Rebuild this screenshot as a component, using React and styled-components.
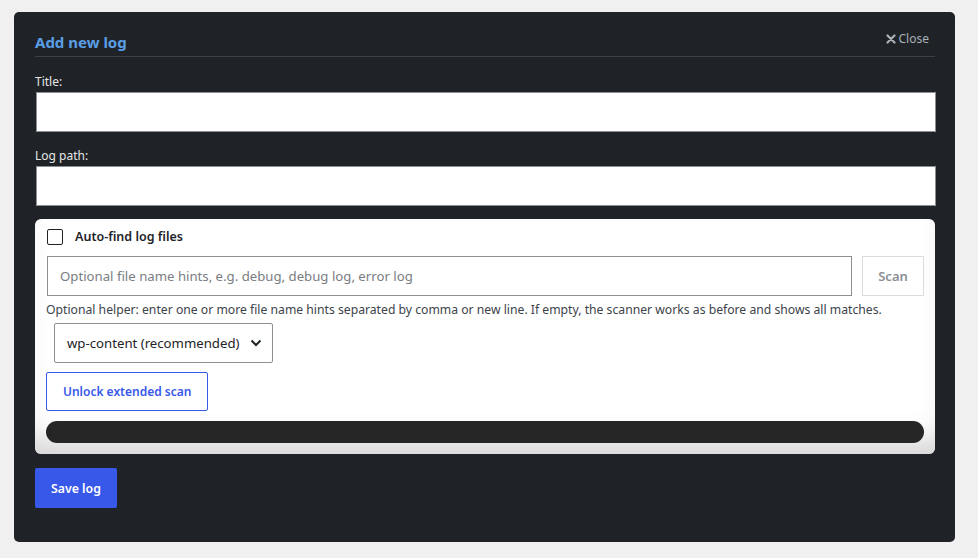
import React from 'react';
import styled, { createGlobalStyle } from 'styled-components';

const Global = createGlobalStyle`
  body {
    margin: 0;
    background: #f0f0f0;
    font-family: "Noto Sans", "Open Sans", sans-serif;
  }
  * { box-sizing: border-box; }
`;

const Page = styled.div`
  padding: 12px 23px 17px 14px;
`;

const Modal = styled.div`
  background: #1f2327;
  border-radius: 5px;
  padding: 18px 20px 34px 20px;
`;

const Header = styled.div`
  display: flex;
  justify-content: space-between;
  align-items: flex-end;
  margin: 0 0 0 1px;
  padding-bottom: 4px;
  border-bottom: 1px solid #3c4147;
`;

const Heading = styled.h2`
  margin: 0;
  font-size: 15px;
  font-weight: 700;
  color: #5a9ee6;
`;

const CloseLink = styled.button`
  display: flex;
  align-items: center;
  gap: 3px;
  background: none;
  border: 0;
  padding: 0;
  margin: 0 6px 5px 0;
  color: #a9b0b8;
  font-family: inherit;
  font-size: 12px;
  cursor: pointer;
`;

const Field = styled.div`
  display: flex;
  flex-direction: column;
  margin-top: ${p => p.$top}px;
`;

const Label = styled.label`
  color: #e6e6e6;
  font-size: 12px;
  margin: 0 0 2px 1px;
`;

const TextInput = styled.input`
  height: 40px;
  margin: 0 -1px 0 2px;
  border: 1px solid #8c8f94;
  background: #fff;
  font-family: inherit;
`;

const Card = styled.div`
  margin: 13px 0 0 1px;
  background: #fff;
  border-radius: 6px;
  padding: 9px 11px 11px 12px;
  box-shadow: inset 0 -28px 30px -16px #d2d2d2;
`;

const CheckRow = styled.label`
  display: flex;
  align-items: center;
  gap: 12px;
  font-size: 12.5px;
  font-weight: 600;
  color: #1d2327;
`;

const Box = styled.span`
  width: 16px;
  height: 16px;
  border: 1.5px solid #1d2327;
  border-radius: 2px;
`;

const ScanRow = styled.div`
  display: flex;
  gap: 10px;
  margin-top: 11px;
`;

const HintInput = styled.input`
  flex: 1;
  height: 40px;
  border: 1px solid #8c8f94;
  padding: 0 12px;
  font-family: inherit;
  font-size: 13.2px;
  &::placeholder { color: #7a7d82; }
`;

const GhostButton = styled.button`
  width: 62px;
  height: 40px;
  background: #fff;
  border: 1px solid #dcdcde;
  color: #8c8f94;
  font-family: inherit;
  font-size: 13px;
  font-weight: 600;
`;

const Help = styled.p`
  margin: 5px 0 0 -1px;
  font-size: 12.2px;
  color: #3c434a;
`;

const Select = styled.div`
  display: inline-flex;
  align-items: center;
  gap: 11px;
  height: 40px;
  margin: 5px 0 0 7px;
  padding: 0 10px 0 12px;
  border: 1px solid #8c8f94;
  border-radius: 2px;
  font-size: 13.2px;
  white-space: nowrap;
  color: #1d2327;
`;

const OutlineButton = styled.button`
  display: block;
  height: 39px;
  margin: 9px 0 0 -1px;
  padding: 0 16px;
  background: transparent;
  border: 1px solid #3858e9;
  border-radius: 2px;
  color: #3858e9;
  font-family: inherit;
  font-size: 12px;
  font-weight: 600;
`;

const Progress = styled.div`
  height: 22px;
  margin: 10px 0 0 -1px;
  border-radius: 11px;
  background: #262626;
`;

const PrimaryButton = styled.button`
  margin: 14px 0 0 1px;
  height: 40px;
  padding: 0 16px;
  background: #3858e9;
  border: 0;
  border-radius: 2px;
  color: #fff;
  font-family: inherit;
  font-size: 12.3px;
  font-weight: 600;
`;

export default function App() {
  return (
    <Page>
      <Global />
      <Modal>
        <Header>
          <Heading>Add new log</Heading>
          <CloseLink>
            <svg width="10" height="10" viewBox="0 0 10 10">
              <path d="M1.5 1.5l7 7M8.5 1.5l-7 7" stroke="#a9b0b8" strokeWidth="2.2" strokeLinecap="round" />
            </svg>
            Close
          </CloseLink>
        </Header>
        <Field $top={16}>
          <Label>Title:</Label>
          <TextInput />
        </Field>
        <Field $top={15}>
          <Label>Log path:</Label>
          <TextInput />
        </Field>
        <Card>
          <CheckRow>
            <Box />
            Auto-find log files
          </CheckRow>
          <ScanRow>
            <HintInput placeholder="Optional file name hints, e.g. debug, debug log, error log" />
            <GhostButton>Scan</GhostButton>
          </ScanRow>
          <Help>
            Optional helper: enter one or more file name hints separated by comma or new line. If empty, the scanner works as before and shows all matches.
          </Help>
          <div>
            <Select>
              wp-content (recommended)
              <svg width="12" height="8" viewBox="0 0 12 8">
                <path d="M1.5 1.5l4.5 4.5 4.5-4.5" fill="none" stroke="#1d2327" strokeWidth="2" />
              </svg>
            </Select>
          </div>
          <OutlineButton>Unlock extended scan</OutlineButton>
          <Progress />
        </Card>
        <PrimaryButton>Save log</PrimaryButton>
      </Modal>
    </Page>
  );
}
